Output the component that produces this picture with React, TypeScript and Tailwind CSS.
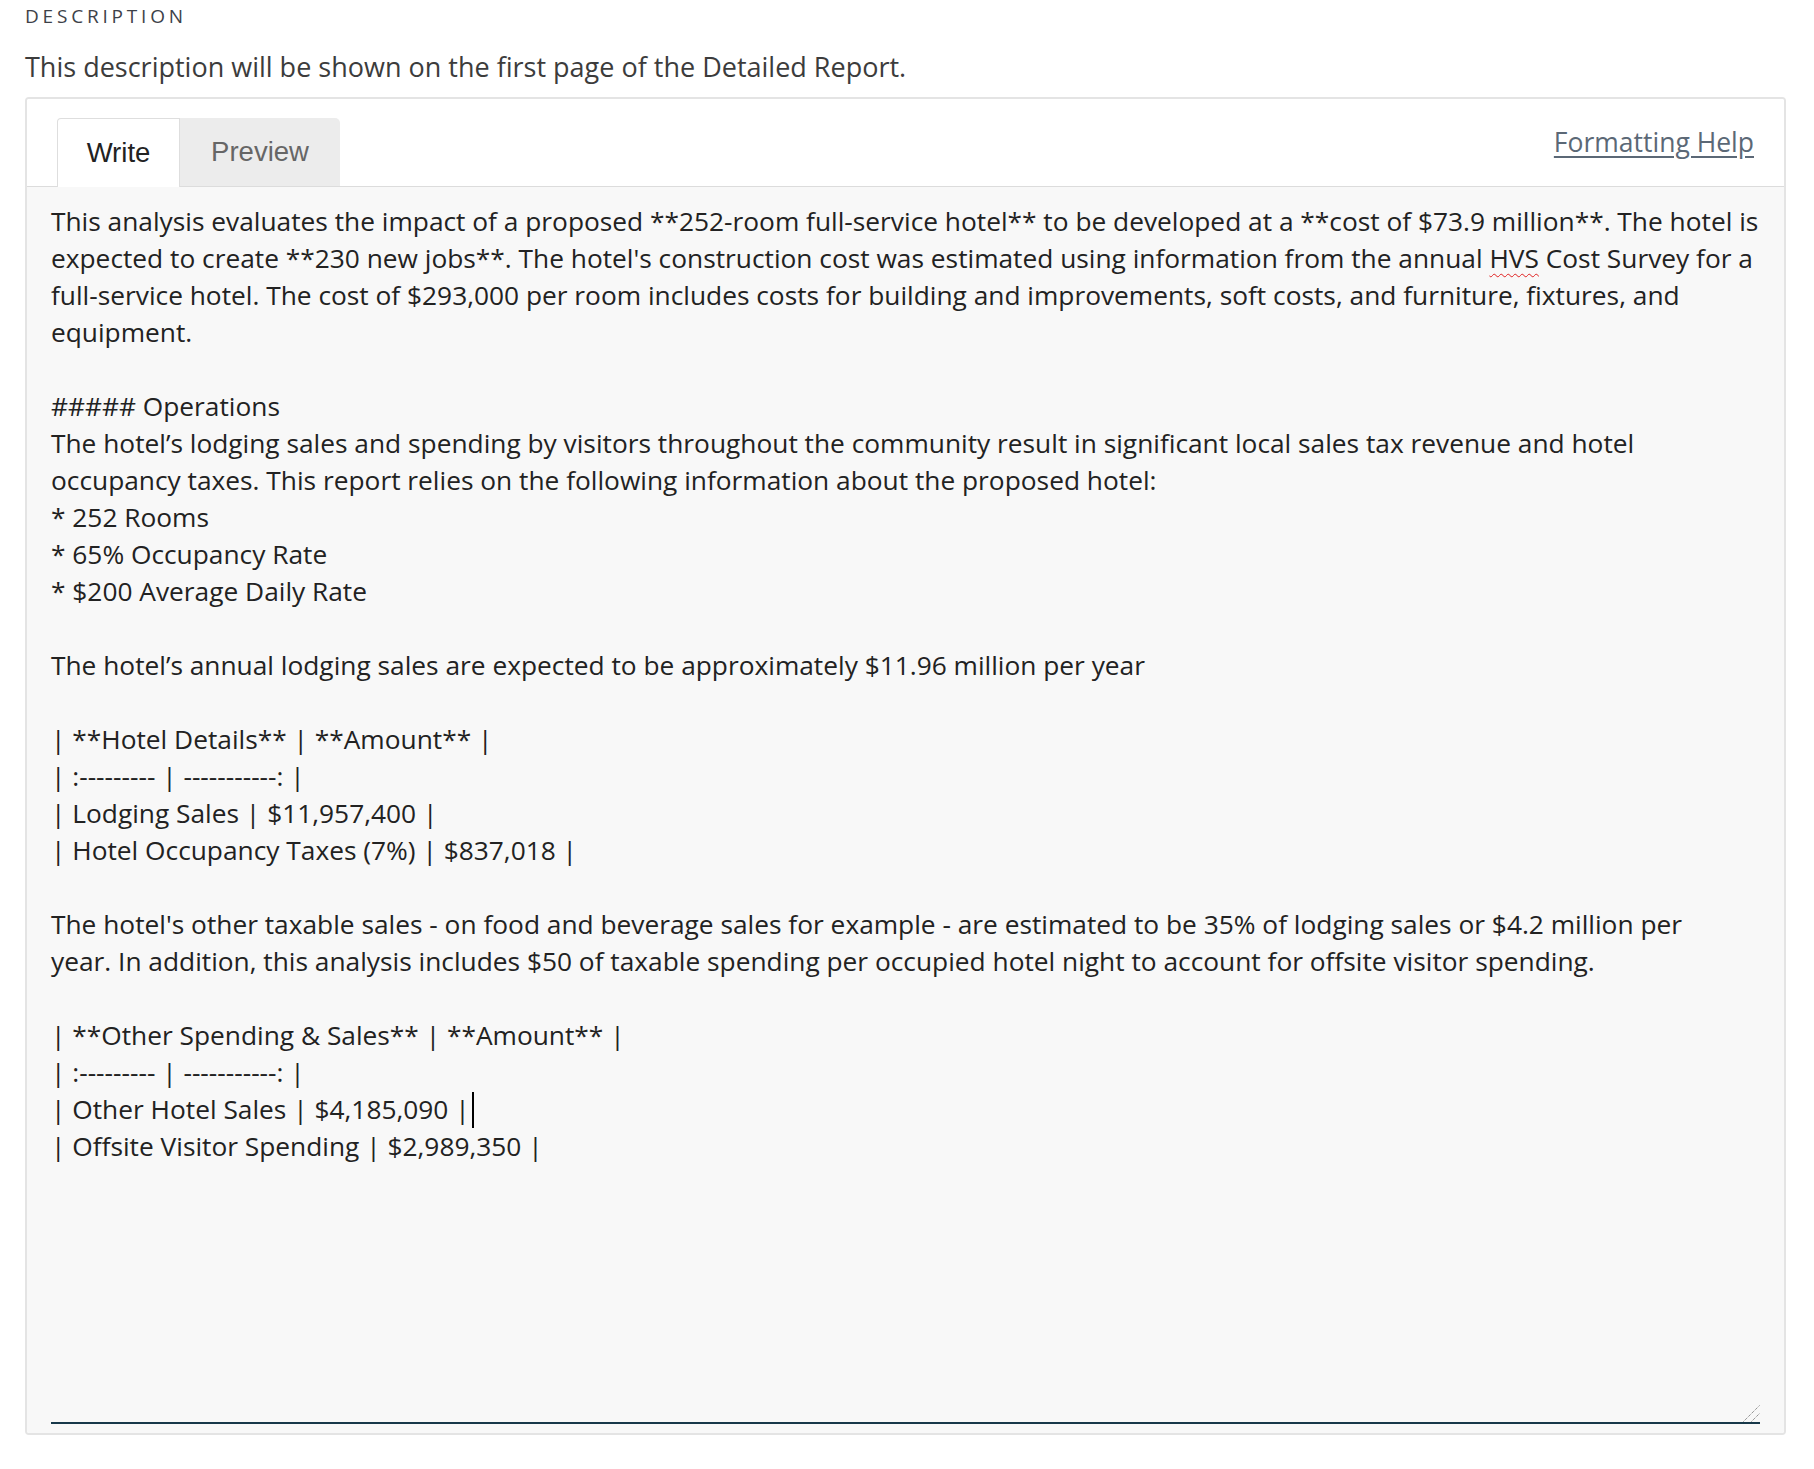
import React from 'react';

const body = '"Open Sans", "Noto Sans", sans-serif';

const lines: React.ReactNode[] = [
  'This analysis evaluates the impact of a proposed **252-room full-service hotel** to be developed at a **cost of $73.9 million**. The hotel is',
  <>
    expected to create **230 new jobs**. The hotel's construction cost was estimated using information from the annual{' '}
    <span className="underline decoration-wavy decoration-[#e02020] decoration-1 underline-offset-[5px]">HVS</span> Cost Survey for a
  </>,
  'full-service hotel. The cost of $293,000 per room includes costs for building and improvements, soft costs, and furniture, fixtures, and',
  'equipment.',
  '',
  '##### Operations',
  'The hotel’s lodging sales and spending by visitors throughout the community result in significant local sales tax revenue and hotel',
  'occupancy taxes. This report relies on the following information about the proposed hotel:',
  '* 252 Rooms',
  '* 65% Occupancy Rate',
  '* $200 Average Daily Rate',
  '',
  'The hotel’s annual lodging sales are expected to be approximately $11.96 million per year',
  '',
  '| **Hotel Details** | **Amount** |',
  '| :--------- | -----------: |',
  '| Lodging Sales | $11,957,400 |',
  '| Hotel Occupancy Taxes (7%) | $837,018 |',
  '',
  "The hotel's other taxable sales - on food and beverage sales for example - are estimated to be 35% of lodging sales or $4.2 million per",
  'year. In addition, this analysis includes $50 of taxable spending per occupied hotel night to account for offsite visitor spending.',
  '',
  '| **Other Spending & Sales** | **Amount** |',
  '| :--------- | -----------: |',
  <>
    | Other Hotel Sales | $4,185,090 |<span className="inline-block w-[2px] h-[36px] bg-black align-[-9px] ml-[2px]" />
  </>,
  '| Offsite Visitor Spending | $2,989,350 |',
];

export default function App() {
  return (
    <div className="min-h-screen bg-white pl-[25px] pr-[28px] pt-[7px]">
      <div
        className="text-[19px] font-medium leading-none tracking-[3.8px] text-[#3d4148]"
        style={{ fontFamily: body }}
      >
        DESCRIPTION
      </div>
      <p
        className="mt-[23px] text-[27px] leading-[36px] text-[#3c3c3c]"
        style={{ fontFamily: body }}
      >
        This description will be shown on the first page of the Detailed Report.
      </p>

      <div className="mt-[12px] border-2 border-[#e4e4e4] rounded-[4px] overflow-hidden">
        <div className="flex items-start justify-between bg-white border-b border-[#dcdcdc] pl-[30px] pr-[30px] pt-[19px]">
          <div className="flex -mb-px" style={{ fontFamily: '"Liberation Sans", Arial, sans-serif' }}>
            <div className="flex h-[69px] w-[123px] items-center justify-center rounded-tl-[4px] border border-b-0 border-[#dedede] bg-white text-[27.5px] text-[#222]">
              Write
            </div>
            <div className="flex h-[68px] w-[160px] items-center justify-center rounded-tr-[5px] bg-[#ececec] text-[27.5px] text-[#666]">
              Preview
            </div>
          </div>
          <a
            href="#"
            className="mt-[6px] text-[26.5px] leading-[37px] text-[#5b6876] underline underline-offset-[4px]"
            style={{ fontFamily: body }}
          >
            Formatting Help
          </a>
        </div>

        <div className="bg-[#f8f8f8] px-6 pt-[16px] pb-[9px]">
          <div
            className="relative h-[1221px] border-b-2 border-[#17384a] text-[26.3px] leading-[37px] text-[#222]"
            style={{ fontFamily: body }}
          >
            {lines.map((l, i) => (
              <div key={i} className="h-[37px] whitespace-pre">
                {l}
              </div>
            ))}
            <svg className="absolute right-0 bottom-0" width="17" height="17" viewBox="0 0 17 17">
              <line x1="0.5" y1="16.5" x2="16.5" y2="0.5" stroke="#6b6b6b" strokeWidth="1" strokeDasharray="1 1" />
              <line x1="8.5" y1="16.5" x2="16.5" y2="8.5" stroke="#6b6b6b" strokeWidth="1" strokeDasharray="1 1" />
            </svg>
          </div>
        </div>
      </div>
    </div>
  );
}
